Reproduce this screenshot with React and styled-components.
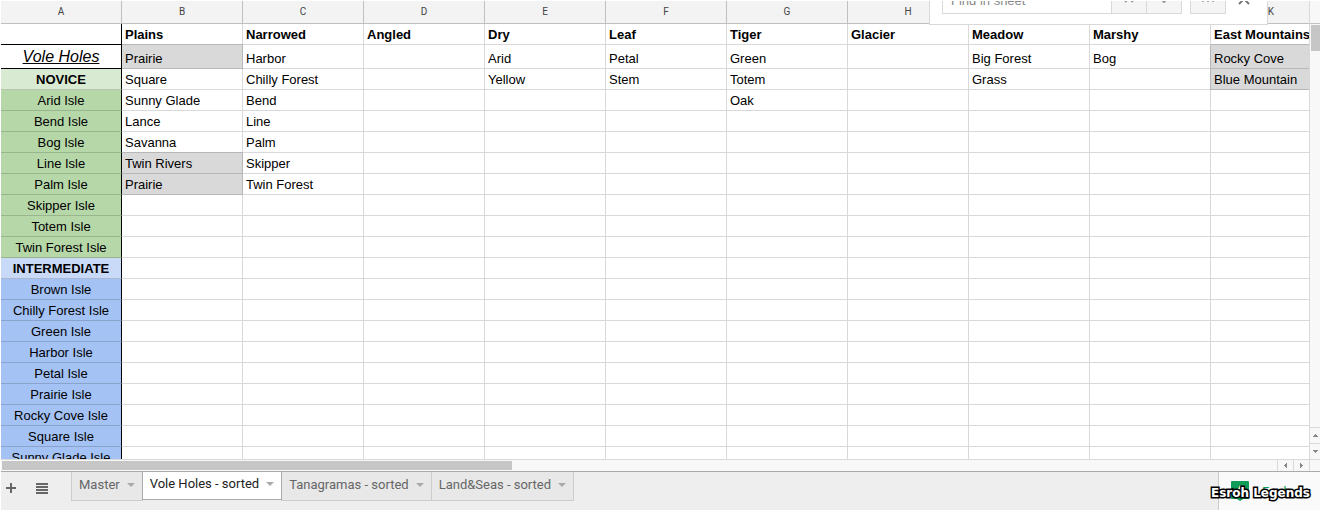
import React from 'react';
import styled, { createGlobalStyle, css } from 'styled-components';

const COLUMNS = ['B', 'C', 'D', 'E', 'F', 'G', 'H', 'I', 'J', 'K'];

const HEADINGS = ['Plains', 'Narrowed', 'Angled', 'Dry', 'Leaf', 'Tiger', 'Glacier', 'Meadow', 'Marshy', 'East Mountains'];

// one list per column, top to bottom; a leading * marks a greyed out cell
const HOLES = {
  B: ['*Prairie', 'Square', 'Sunny Glade', 'Lance', 'Savanna', '*Twin Rivers', '*Prairie'],
  C: ['Harbor', 'Chilly Forest', 'Bend', 'Line', 'Palm', 'Skipper', 'Twin Forest'],
  E: ['Arid', 'Yellow'],
  F: ['Petal', 'Stem'],
  G: ['Green', 'Totem', 'Oak'],
  I: ['Big Forest', 'Grass'],
  J: ['Bog'],
  K: ['*Rocky Cove', '*Blue Mountain'],
};

const ISLES = [
  ['Vole Holes', 'title'],
  ['NOVICE', 'noviceHead'],
  ['Arid Isle', 'novice'],
  ['Bend Isle', 'novice'],
  ['Bog Isle', 'novice'],
  ['Line Isle', 'novice'],
  ['Palm Isle', 'novice'],
  ['Skipper Isle', 'novice'],
  ['Totem Isle', 'novice'],
  ['Twin Forest Isle', 'novice'],
  ['INTERMEDIATE', 'midHead'],
  ['Brown Isle', 'mid'],
  ['Chilly Forest Isle', 'mid'],
  ['Green Isle', 'mid'],
  ['Harbor Isle', 'mid'],
  ['Petal Isle', 'mid'],
  ['Prairie Isle', 'mid'],
  ['Rocky Cove Isle', 'mid'],
  ['Square Isle', 'mid'],
  ['Sunny Glade Isle', 'mid'],
];

const TABS = ['Master', 'Vole Holes - sorted', 'Tanagramas - sorted', 'Land&Seas - sorted'];

const Arrow = ({ d }) => (
  <svg width="7" height="7" viewBox="0 0 7 7" fill="#888" aria-hidden="true"><path d={d} /></svg>
);

const UP = 'M1 5h5V4H5V3H4V2H3v1H2v1H1z';
const DOWN = 'M1 2h5v1H5v1H4v1H3V4H2V3H1z';
const LEFT = 'M5 1v5H4V5H3V4H2V3h1V2h1V1z';
const RIGHT = 'M2 1v5h1V5h1V4h1V3H4V2H3V1z';

export default function App() {
  return (
    <Page>
      <GlobalStyle />
      <Main>
        <SheetArea>
          <Sheet>
            <thead>
              <tr>
                <Letter>A</Letter>
                {COLUMNS.map((c) => <Letter key={c}>{c}</Letter>)}
              </tr>
            </thead>
            <tbody>
              <tr>
                <IsleCell $kind="blank" />
                {HEADINGS.map((h) => <Cell key={h} $bold>{h}</Cell>)}
              </tr>
              {ISLES.map(([name, kind], i) => (
                <tr key={name}>
                  <IsleCell $kind={kind}>{name}</IsleCell>
                  {COLUMNS.map((c) => {
                    const value = (HOLES[c] || [])[i] || '';
                    return (
                      <Cell key={c} $grey={value.startsWith('*')} $first={c === 'B'} $tall={kind === 'title'}>
                        {value.replace('*', '')}
                      </Cell>
                    );
                  })}
                </tr>
              ))}
            </tbody>
          </Sheet>
        </SheetArea>
        <VerticalBar>
          <BarHead />
          <VerticalThumb />
          <ScrollButton aria-label="Scroll up"><Arrow d={UP} /></ScrollButton>
          <ScrollButton aria-label="Scroll down"><Arrow d={DOWN} /></ScrollButton>
        </VerticalBar>
      </Main>
      <HorizontalBar>
        <HorizontalTrack><HorizontalThumb /></HorizontalTrack>
        <SideButton aria-label="Scroll left"><Arrow d={LEFT} /></SideButton>
        <SideButton aria-label="Scroll right"><Arrow d={RIGHT} /></SideButton>
        <Corner />
      </HorizontalBar>
      <Footer>
        <IconButton aria-label="Add sheet">
          <svg width="10" height="10" viewBox="0 0 10 10" fill="#666"><path d="M4 0h2v4h4v2H6v4H4V6H0V4h4z" /></svg>
        </IconButton>
        <IconButton aria-label="All sheets">
          <svg width="12" height="11" viewBox="0 0 12 11" fill="#666"><path d="M0 0h12v2H0zM0 3h12v2H0zM0 6h12v2H0zM0 9h12v2H0z" /></svg>
        </IconButton>
        <Tabs>
          {TABS.map((t) => (
            <Tab key={t} $active={t === 'Vole Holes - sorted'}>
              {t}
              <svg width="8" height="4" viewBox="0 0 8 4" fill="#aaa"><path d="M0 0h8L4 4z" /></svg>
            </Tab>
          ))}
        </Tabs>
        <Explore>
          <svg width="18" height="20" viewBox="0 0 18 20">
            <path d="M1 0h16a1 1 0 0 1 1 1v16a1 1 0 0 1-1 1h-5l-3 2-3-2H1a1 1 0 0 1-1-1V1a1 1 0 0 1 1-1z" fill="#0f9d58" />
            <path d="M9 4l1.500 3.500L14 9l-3.500 1.500L9 14l-1.500-3.500L4 9l3.500-1.500z" fill="#fff" />
          </svg>
          Explore
        </Explore>
      </Footer>
      <FindBar>
        <FindInput aria-label="Find in sheet" placeholder="Find in sheet" />
        <FindButton aria-label="Previous">
          <svg width="10" height="6" viewBox="0 0 10 6" fill="none" stroke="#999" strokeWidth="2"><path d="M1 5l4-4 4 4" /></svg>
        </FindButton>
        <FindButton aria-label="Next">
          <svg width="10" height="6" viewBox="0 0 10 6" fill="none" stroke="#999" strokeWidth="2"><path d="M1 1l4 4 4-4" /></svg>
        </FindButton>
        <MoreButton aria-label="More options">
          <svg width="12" height="4" viewBox="0 0 12 4" fill="#aaa"><path d="M0 1h2v3H0zM5 1h2v3H5zM10 1h2v3h-2z" /></svg>
        </MoreButton>
        <CloseButton aria-label="Close">
          <svg width="12" height="12" viewBox="0 0 12 12" fill="none" stroke="#777" strokeWidth="2"><path d="M1 1l10 10M11 1L1 11" /></svg>
        </CloseButton>
      </FindBar>
      <Watermark>Esroh Legends</Watermark>
    </Page>
  );
}

const GlobalStyle = createGlobalStyle`
  * {
    box-sizing: border-box;
  }
  body {
    margin: 0;
    background: #fff;
    font-family: "Liberation Sans", Arial, sans-serif;
  }
  button, input {
    font-family: inherit;
    border: 0;
    padding: 0;
    margin: 0;
    border-radius: 0;
  }
`;

const Page = styled.div`
  position: relative;
  display: flex;
  flex-direction: column;
  height: 100vh;
  border: 1px solid #fff;
  overflow: hidden;
`;

const Main = styled.div`
  display: flex;
  flex: 1;
  min-height: 0;
`;

const SheetArea = styled.div`
  flex: 1;
  min-width: 0;
  overflow: hidden;
  border-right: 1px solid #d9d9d9;
  border-bottom: 1px solid #d9d9d9;
`;

const Sheet = styled.table`
  table-layout: fixed;
  width: 1331px;
  border-collapse: separate;
  border-spacing: 0;
  color: #000;
`;

const Letter = styled.th`
  height: 23px;
  padding: 0;
  background: #f3f3f3;
  border-right: 1px solid #c0c0c0;
  border-bottom: 1px solid #c0c0c0;
  color: #444;
  font-family: Roboto, "Liberation Sans", sans-serif;
  font-size: 10px;
  font-weight: normal;
  line-height: 20px;
`;

const Cell = styled.td`
  height: ${(p) => (p.$tall ? 24 : 21)}px;
  padding: 0 3px;
  border-right: 1px solid #d9d9d9;
  border-bottom: 1px solid #d9d9d9;
  background: #fff;
  font-size: 13px;
  font-weight: ${(p) => (p.$bold ? 'bold' : 'normal')};
  line-height: 18px;
  vertical-align: bottom;
  white-space: nowrap;
  ${(p) => p.$grey && css`
    border-color: #b7b7b7;
    background: #d9d9d9;
    box-shadow: 0 -1px 0 #b7b7b7${p.$first ? '' : ', -1px 0 0 #b7b7b7'};
  `}
`;

const kinds = {
  blank: css`
    border-bottom-color: #000;
  `,
  title: css`
    height: 24px;
    border-bottom-color: #000;
    font-size: 16px;
    font-style: italic;
    line-height: 22px;
    text-decoration: underline;
  `,
  noviceHead: css`
    background: #d9ead3;
    border-bottom-color: #b6c5b1;
    font-weight: bold;
  `,
  novice: css`
    background: #b6d7a8;
    border-bottom-color: #99b58d;
  `,
  midHead: css`
    background: #c9daf8;
    border-bottom-color: #a9b7d0;
    font-weight: bold;
  `,
  mid: css`
    background: #a4c2f4;
    border-bottom-color: #8aa3cd;
  `,
};

const IsleCell = styled(Cell)`
  border-right-color: #000;
  text-align: center;
  ${(p) => kinds[p.$kind]}
`;

const VerticalBar = styled.div`
  display: flex;
  flex-direction: column;
  width: 10px;
  border-bottom: 1px solid #d9d9d9;
  background: #f8f8f8;
`;

const BarHead = styled.div`
  height: 23px;
  border-bottom: 1px solid #c0c0c0;
`;

const VerticalThumb = styled.div`
  height: 26px;
  margin: 1px 0 auto 1px;
  background: #c6c6c6;
`;

const ScrollButton = styled.button`
  display: flex;
  align-items: center;
  justify-content: center;
  height: 16px;
  border-top: 1px solid #d9d9d9;
  background: #f8f8f8;
`;

const HorizontalBar = styled.div`
  display: flex;
  height: 11px;
  background: #f8f8f8;
`;

const HorizontalTrack = styled.div`
  flex: 1;
  padding: 1px;
`;

const HorizontalThumb = styled.div`
  width: 40%;
  height: 9px;
  background: #c6c6c6;
`;

const SideButton = styled.button`
  display: flex;
  align-items: center;
  justify-content: center;
  width: 16px;
  border-left: 1px solid #d9d9d9;
  background: #f8f8f8;
`;

const Corner = styled.div`
  width: 11px;
  border-left: 1px solid #d9d9d9;
`;

const Footer = styled.footer`
  display: flex;
  height: 39px;
  border-top: 1px solid #aaa;
  background: #eee;
`;

const IconButton = styled.button`
  display: flex;
  align-items: center;
  justify-content: center;
  width: 20px;
  height: 32px;
  background: none;

  & + & {
    width: 42px;
  }
`;

const Tabs = styled.nav`
  display: flex;
  align-items: flex-start;
  margin-left: 8px;
`;

const Tab = styled.button`
  display: flex;
  align-items: center;
  gap: 7px;
  height: 29px;
  padding: 0 7px 3px;
  border: 1px solid #ccc;
  border-top: 0;
  background: #e8e8e8;
  color: #666;
  font-family: Roboto, "Liberation Sans", sans-serif;
  font-size: 13px;
  white-space: nowrap;

  & + & {
    margin-left: -1px;
  }
  ${(p) => p.$active && css`
    z-index: 1;
    height: 28px;
    padding-bottom: 4px;
    border-color: #aaa;
    background: #fff;
    color: #222;
  `}
`;

const Explore = styled.button`
  display: flex;
  align-items: center;
  gap: 13px;
  width: 102px;
  margin-left: auto;
  padding-left: 12px;
  border-left: 1px solid #ccc;
  background: #fafafa;
  color: #0f9d58;
  font-family: Roboto, "Liberation Sans", sans-serif;
  font-size: 13px;
`;

// floats over the column letters, scrolled partly out of the window
const FindBar = styled.div`
  position: absolute;
  top: -23px;
  right: 52px;
  display: flex;
  align-items: flex-end;
  width: 339px;
  height: 47px;
  padding: 0 6px 10px 12px;
  border: 1px solid #d9d9d9;
  background: #fff;
`;

const FindInput = styled.input`
  flex: 1;
  min-width: 0;
  height: 28px;
  padding-left: 8px;
  border: 1px solid #d9d9d9;
  font-size: 13px;

  &::placeholder {
    color: #888;
  }
`;

const FindButton = styled.button`
  display: flex;
  align-items: center;
  justify-content: center;
  width: 35px;
  height: 28px;
  border: 1px solid #d9d9d9;
  border-left: 0;
  background: #f5f5f5;
`;

const MoreButton = styled(FindButton)`
  width: 36px;
  margin-left: 8px;
  border-left: 1px solid #d9d9d9;
`;

const CloseButton = styled.button`
  width: 35px;
  height: 28px;
  background: none;
`;

const Watermark = styled.div`
  position: absolute;
  right: 10px;
  bottom: 9px;
  color: #fff;
  font-family: "DejaVu Sans", sans-serif;
  font-size: 12px;
  font-weight: bold;
  line-height: 16px;
  -webkit-text-stroke: 3px #000;
  paint-order: stroke fill;
`;
